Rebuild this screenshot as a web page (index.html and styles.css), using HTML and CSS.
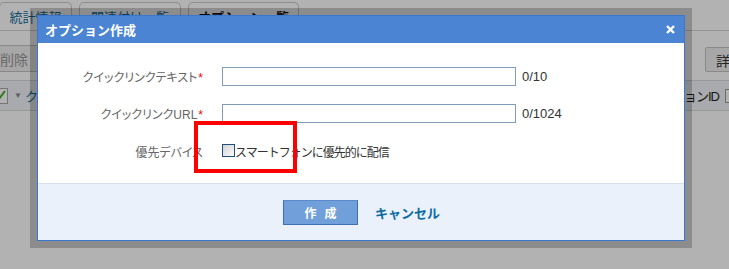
FILE: index.html
```html
<!DOCTYPE html>
<html lang="ja">
<head>
    <meta charset="UTF-8">
    <meta name="viewport" content="width=device-width, initial-scale=1.0">
    <title>オプション作成</title>
    <link rel="stylesheet" href="styles.css">
</head>
<body>

<div class="page">
    <div class="tabs">
        <div class="tab tab-first">統計情報</div>
        <div class="tab tab-second">関連付け一覧</div>
        <div class="tab tab-active">オプション一覧</div>
    </div>

    <div class="toolbar">
        <button class="tool-btn btn-delete">削除</button>
        <button class="tool-btn btn-detail">詳細</button>
    </div>

    <div class="grid-head">
        <div class="head-left">
            <span class="head-check">
                <svg width="14" height="14" viewBox="0 0 14 14">
                    <path d="M3 7 L6 10 L12 2" fill="none" stroke="#3fae2a" stroke-width="2"/>
                </svg>
            </span>
            <span class="sort-arrow">▼</span>
            <span class="head-link">クイックリンク</span>
        </div>
        <div class="head-right">
            <span>オプションID</span>
            <span class="head-box"></span>
        </div>
    </div>
</div>

<div class="mask"></div>

<div class="dialog-frame">
    <div class="dialog">
        <div class="dialog-title">
            <span>オプション作成</span>
            <svg class="close-icon" width="9" height="9" viewBox="0 0 9 9">
                <path d="M1 1 L8 8 M8 1 L1 8" stroke="#fff" stroke-width="2.4"/>
            </svg>
        </div>

        <div class="dialog-body">
            <div class="form-row">
                <label for="qt-text">クイックリンクテキスト<span class="req">*</span></label>
                <input type="text" id="qt-text">
                <span class="counter">0/10</span>
            </div>
            <div class="form-row">
                <label for="qt-url">クイックリンクURL<span class="req">*</span></label>
                <input type="text" id="qt-url">
                <span class="counter">0/1024</span>
            </div>
            <div class="form-row row-device">
                <label for="prefer-phone">優先デバイス</label>
                <div class="check-wrap">
                    <input type="checkbox" id="prefer-phone" class="check">
                    <span>スマートフォンに優先的に配信</span>
                </div>
            </div>
        </div>

        <div class="dialog-footer">
            <button class="btn-create">作成</button>
            <a class="link-cancel" href="#">キャンセル</a>
        </div>
    </div>
</div>

<!-- annotation box -->
<div class="mark"></div>

</body>
</html>
```

FILE: styles.css
```css
body {
    margin: 0;
    font-family: "Liberation Sans", "Noto Sans CJK JP", sans-serif;
    background-color: #fff;
    overflow: hidden;
}
.page {
    width: 729px;
    height: 269px;
}
.tabs {
    display: flex;
    gap: 7px;
    padding-top: 2px;
    height: 28px;
    border-bottom: 1px solid #d4d4d4;
}
.tab {
    display: flex;
    align-items: center;
    justify-content: center;
    border: 1px solid #cbcbcb;
    border-bottom: none;
    border-radius: 5px 5px 0 0;
    font-size: 13px;
    color: #126c9c;
    box-sizing: border-box;
}
.tab-first {
    width: 73px;
    margin-left: -1px;
}
.tab-second {
    width: 102px;
}
.tab-active {
    width: 111px;
    color: #111;
    font-weight: bold;
}
.toolbar {
    display: flex;
    justify-content: space-between;
    align-items: flex-start;
    height: 49px;
}
.tool-btn {
    font-family: inherit;
    font-size: 14px;
    background: #efefef;
    border: 1px solid #c4c4c4;
    border-radius: 2px;
    padding: 0 10px;
    box-sizing: border-box;
}
.btn-delete {
    margin-top: 14px;
    margin-left: -11px;
    height: 27px;
    color: #999;
}
.btn-detail {
    margin-top: 16px;
    margin-right: -26px;
    height: 25px;
    color: #333;
}
.grid-head {
    display: flex;
    justify-content: space-between;
    align-items: center;
    height: 29px;
    background: #f1f4f8;
    border-top: 1px solid #d8d8d8;
    border-bottom: 1px solid #d8d8d8;
    font-size: 13px;
}
.head-left,
.head-right {
    display: flex;
    align-items: center;
}
.head-check {
    display: inline-flex;
    width: 14px;
    height: 14px;
    margin-left: -8px;
    border: 1px solid #aaa;
    background: #fff;
}
.sort-arrow {
    font-size: 8px;
    color: #888;
    margin-left: 6px;
}
.head-link {
    color: #126c9c;
    margin-left: 3px;
}
.head-right span:first-child {
    color: #222;
    letter-spacing: -1px;
    margin-right: 6px;
}
.head-box {
    width: 12px;
    height: 12px;
    border: 1px solid #999;
    background: #fff;
    margin-right: -10px;
}
.mask {
    position: absolute;
    top: 0;
    left: 0;
    width: 729px;
    height: 269px;
    background: rgba(0, 0, 0, 0.3);
}
.dialog-frame {
    position: absolute;
    top: 8px;
    left: 30px;
    padding: 7px;
    background: rgba(0, 0, 0, 0.21);
}
.dialog {
    width: 646px;
    border: 1px solid #3a78cf;
    background: #fff;
}
.dialog-title {
    display: flex;
    justify-content: space-between;
    align-items: center;
    height: 27px;
    padding: 0 8px 0 7px;
    background: #4a84d3;
    color: #fff;
    font-size: 13px;
    font-weight: bold;
}
.close-icon {
    margin-right: 1px;
}
.dialog-body {
    padding: 24px 0 23px 0;
    height: 93px;
}
.form-row {
    display: grid;
    grid-template-columns: 184px 294px auto;
    align-items: center;
    height: 19px;
    margin-bottom: 18px;
}
.form-row label {
    text-align: right;
    font-size: 12px;
    font-feature-settings: "palt";
    letter-spacing: 0;
    color: #666;
    padding-right: 19px;
}
.req {
    color: #e00;
    margin-left: 1px;
}
.form-row input[type="text"] {
    width: 294px;
    height: 19px;
    box-sizing: border-box;
    border: 1px solid #7f9db9;
    padding: 0 3px;
    margin: 0;
}
.counter {
    font-size: 13px;
    color: #333;
    margin-left: 6px;
}
.row-device {
    margin-top: 19px;
    margin-bottom: 0;
}
.check-wrap {
    display: flex;
    align-items: center;
    grid-column: 2 / 4;
    font-size: 12px;
    letter-spacing: -1px;
    color: #333;
}
.check {
    appearance: none;
    -webkit-appearance: none;
    width: 13px;
    height: 13px;
    margin: -3px 0 0 0;
    border: 1px solid #1f4e7d;
    border-radius: 0;
    background: linear-gradient(135deg, #d2d2d2, #fbfbfb);
}
.dialog-footer {
    display: flex;
    justify-content: center;
    align-items: center;
    gap: 17px;
    height: 56px;
    border-top: 1px solid #d5e1f1;
    background: #eaf1fa;
}
.btn-create {
    width: 75px;
    height: 25px;
    margin-left: 1px;
    background: #709fd9;
    border: 1px solid #3f70b5;
    border-top-color: #5a8acb;
    border-radius: 0;
    color: #fff;
    font-family: inherit;
    font-size: 12px;
    font-weight: bold;
    letter-spacing: 8px;
    padding: 0 0 0 8px;
}
.link-cancel {
    color: #0a6aa1;
    font-size: 13px;
    font-weight: bold;
    text-decoration: none;
}
.mark {
    position: absolute;
    top: 121px;
    left: 194px;
    width: 95px;
    height: 44px;
    border: 4px solid #ff0000;
}
```
